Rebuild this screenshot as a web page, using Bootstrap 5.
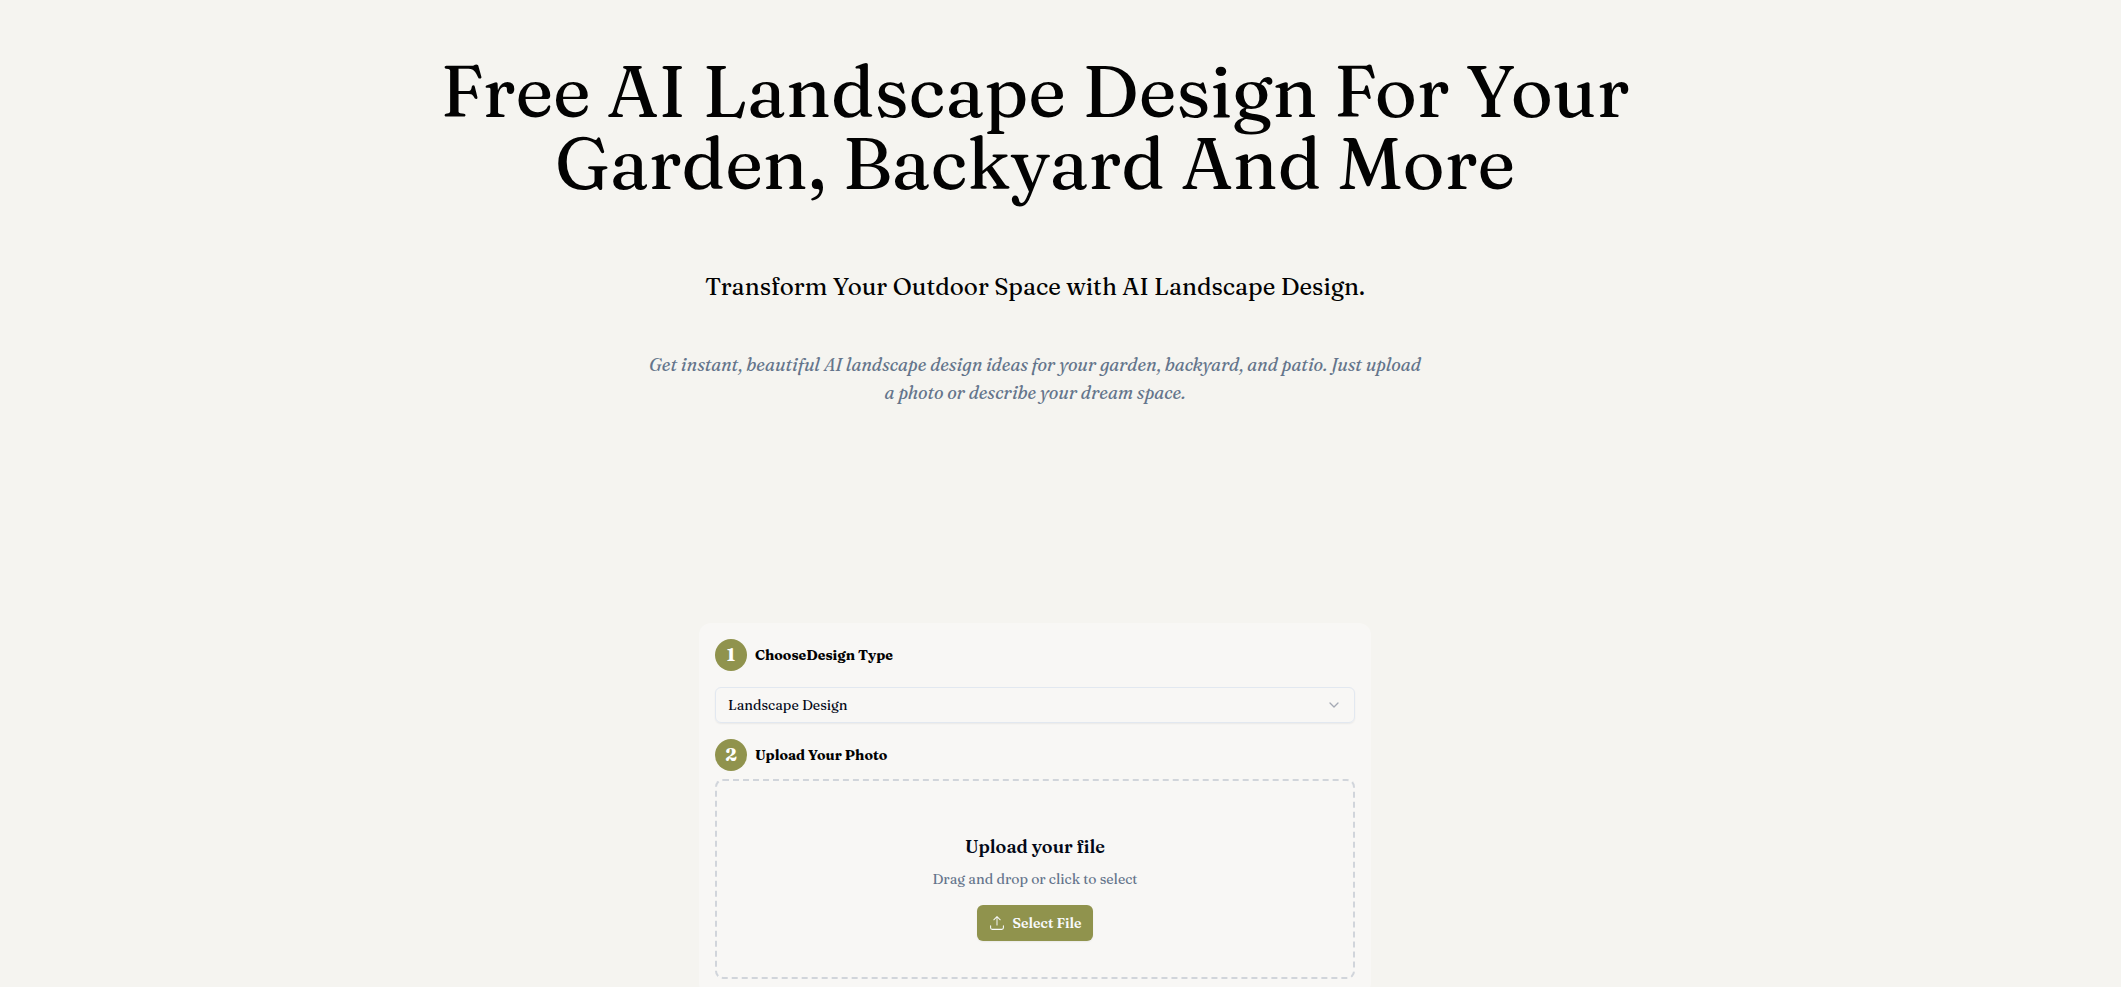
<!DOCTYPE html>
<html lang="en">
<head>
<meta charset="utf-8">
<meta name="viewport" content="width=device-width, initial-scale=1">
<title>Free AI Landscape Design</title>
<link href="https://cdn.jsdelivr.net/npm/bootstrap@5.3.0/dist/css/bootstrap.min.css" rel="stylesheet">
<style>
  :root { --olive: #90934d; --slate: #64748b; }
  body { background: #f5f4f0; color: #020202; font-family: Fraunces, "Liberation Serif", serif; }
  .page-wrap { padding: 55px 51px 40px 0; }
  .hero-title { max-width: 1280px; font-size: 72px; line-height: 72px; font-weight: 400; margin-bottom: 72px; }
  .hero-sub { font-size: 24px; line-height: 32px; margin-bottom: 48px; }
  .hero-text { max-width: 800px; font-size: 18px; line-height: 28px; color: var(--slate); margin-bottom: 216px; }
  .tool-panel { max-width: 672px; background: #f8f7f5; border-radius: 12px; }
  .step-num { width: 32px; height: 32px; background: var(--olive); font-size: 18px; line-height: 28px; }
  .step-label { font-size: 14px; line-height: 20px; }
  .type-select {
    height: 36px; padding: 0 36px 0 12px; font-size: 14px; line-height: 20px; color: #020817;
    border: 1px solid #e2e8f0; border-radius: 6px; background-color: transparent;
    background-image: url("data:image/svg+xml,%3Csvg xmlns='http://www.w3.org/2000/svg' viewBox='0 0 16 16' fill='none' stroke='%23a4a9b4' stroke-width='1.3' stroke-linecap='round' stroke-linejoin='round'%3E%3Cpath d='M4 6l4 4 4-4'/%3E%3C/svg%3E");
    background-position: right 12px center; background-size: 16px 16px;
    box-shadow: 0 1px 2px rgba(0,0,0,.06);
  }
  .drop-zone { height: 200px; padding-top: 16px; border: 2px dashed #d1d5db; border-radius: 8px; }
  .drop-title { font-size: 18px; line-height: 28px; font-weight: 600; color: #020817; }
  .drop-hint { font-size: 14px; line-height: 20px; color: var(--slate); }
  .file-btn {
    --bs-btn-color: #f8fafc; --bs-btn-bg: #90934d; --bs-btn-hover-color: #fff; --bs-btn-hover-bg: #7f8243;
    height: 36px; padding: 0 12px; border: 0; border-radius: 6px; font-size: 14px; line-height: 20px; font-weight: 600;
    box-shadow: 0 1px 2px rgba(0,0,0,.06);
  }
</style>
</head>
<body>
<main class="page-wrap">
  <header class="text-center">
    <h1 class="hero-title mx-auto">Free AI Landscape Design For Your<br>Garden, Backyard And More</h1>
    <p class="hero-sub">Transform Your Outdoor Space with AI Landscape Design.</p>
    <p class="hero-text mx-auto fst-italic">Get instant, beautiful AI landscape design ideas for your garden, backyard, and patio. Just upload<br>a photo or describe your dream space.</p>
  </header>
  <form class="tool-panel mx-auto p-3">
    <div class="d-flex align-items-center gap-2 mb-3">
      <span class="step-num rounded-circle text-white fw-bold d-flex align-items-center justify-content-center">1</span>
      <label class="step-label fw-bold" for="designType">ChooseDesign Type</label>
    </div>
    <select id="designType" class="form-select type-select mb-3">
      <option selected>Landscape Design</option>
    </select>
    <div class="d-flex align-items-center gap-2 mb-2">
      <span class="step-num rounded-circle text-white fw-bold d-flex align-items-center justify-content-center">2</span>
      <span class="step-label fw-bold">Upload Your Photo</span>
    </div>
    <div class="drop-zone d-flex flex-column align-items-center justify-content-center text-center">
      <h2 class="drop-title mb-2">Upload your file</h2>
      <p class="drop-hint mb-3">Drag and drop or click to select</p>
      <button type="button" class="btn file-btn d-inline-flex align-items-center gap-2">
        <svg width="16" height="16" viewBox="0 0 15 15" fill="currentColor" aria-hidden="true"><path fill-rule="evenodd" clip-rule="evenodd" d="M7.818 1.182a.45.45 0 0 0-.636 0l-3 3a.45.45 0 1 0 .636.636L7.05 2.586V9.5a.45.45 0 0 0 .9 0V2.586l2.232 2.232a.45.45 0 1 0 .636-.636l-3-3ZM1 10a.5.5 0 0 1 1 0v2c0 .554.446 1 .996 1h9.005A1 1 0 0 0 13 12v-2a.5.5 0 0 1 1 0v2a2 2 0 0 1-1.999 2H2.996A1.997 1.997 0 0 1 1 12v-2Z"/></svg>
        Select File
      </button>
    </div>
  </form>
</main>
<script src="https://cdn.jsdelivr.net/npm/bootstrap@5.3.0/dist/js/bootstrap.bundle.min.js"></script>
</body>
</html>
